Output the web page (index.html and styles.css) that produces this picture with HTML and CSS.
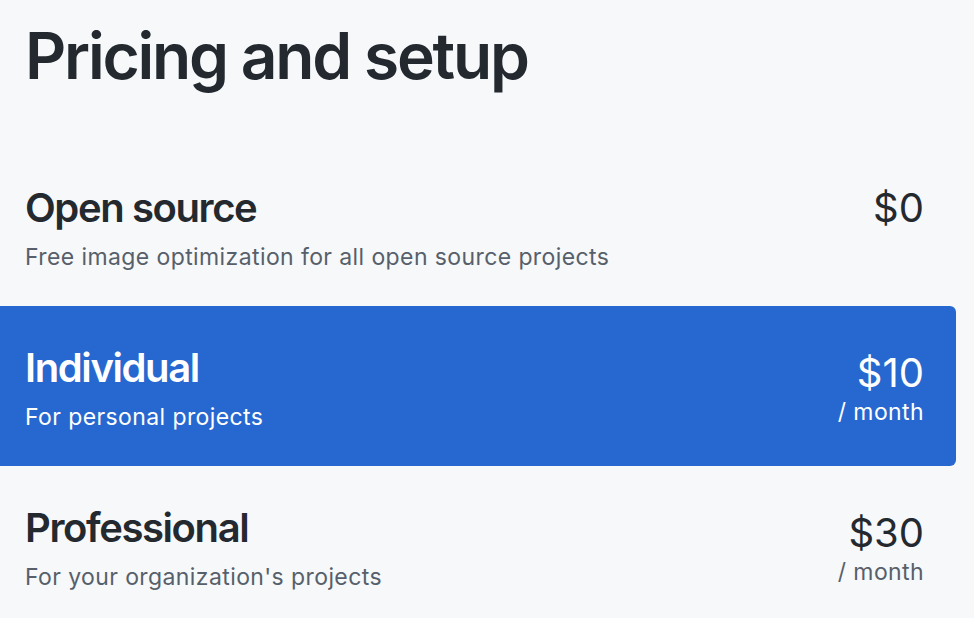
FILE: index.html
```html
<!DOCTYPE html>
<html lang="en">
<head>
<meta charset="utf-8">
<title>Pricing and setup</title>
<link rel="stylesheet" href="styles.css">
</head>
<body>
<main class="page">
  <h1 class="page-title">Pricing and setup</h1>
  <ul class="plans">
    <li class="plan">
      <div class="plan-info">
        <h2 class="plan-name">Open source</h2>
        <p class="plan-desc">Free image optimization for all open source projects</p>
      </div>
      <div class="plan-price">
        <div class="price">$0</div>
      </div>
    </li>
    <li class="plan plan-selected">
      <div class="plan-info">
        <h2 class="plan-name">Individual</h2>
        <p class="plan-desc">For personal projects</p>
      </div>
      <div class="plan-price">
        <div class="price">$10</div>
        <div class="period">/ month</div>
      </div>
    </li>
    <li class="plan">
      <div class="plan-info">
        <h2 class="plan-name">Professional</h2>
        <p class="plan-desc">For your organization's projects</p>
      </div>
      <div class="plan-price">
        <div class="price">$30</div>
        <div class="period">/ month</div>
      </div>
    </li>
  </ul>
</main>
</body>
</html>
```
FILE: styles.css
```css
* { box-sizing: border-box; }

html, body {
  margin: 0;
  padding: 0;
  background: #f6f8fa;
}

body {
  font-family: Inter, "Noto Sans", "Liberation Sans", sans-serif;
  color: #24292f;
  overflow: hidden;
}

.page {
  padding: 0 18px 0 0;
}

.page-title {
  margin: 0;
  padding: 16px 0 0 25px;
  font-size: 64px;
  line-height: 80px;
  font-weight: 600;
  letter-spacing: -2.2px;
  height: 146px;
}

.plans {
  list-style: none;
  margin: 0 0 0 -6px;
  padding: 0;
}

.plan {
  display: flex;
  justify-content: space-between;
  align-items: flex-start;
  height: 160px;
  padding: 38px 32px 0 31px;
  border-radius: 6px;
}

.plan-selected {
  background: #2768d0;
  color: #ffffff;
}

.plan-name {
  margin: 0;
  font-size: 40px;
  line-height: 48px;
  font-weight: 600;
  letter-spacing: -1.4px;
}

.plan-desc {
  margin: 8px 0 0;
  font-size: 23px;
  line-height: 34px;
  letter-spacing: 0.4px;
  color: #57606a;
}

.plan-selected .plan-desc {
  color: #ffffff;
}

.plan-price {
  text-align: right;
}

.price {
  font-size: 40px;
  line-height: 48px;
  font-weight: 400;
}

.plan-selected .price,
.plan + .plan-selected ~ .plan .price {
  margin-top: 5px;
}

.period {
  font-size: 23px;
  line-height: 30px;
  letter-spacing: 0.4px;
  color: #57606a;
}

.plan-selected .period {
  color: #ffffff;
}
```
